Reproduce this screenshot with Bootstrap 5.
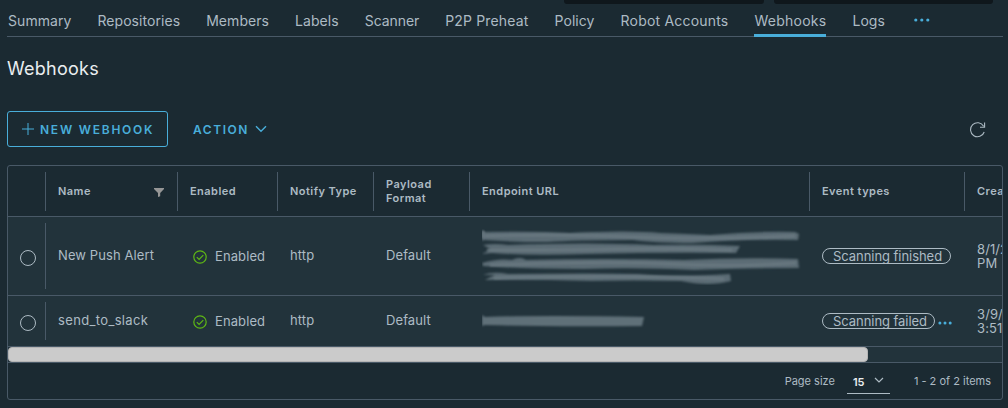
<!DOCTYPE html>
<html lang="en">
<head>
<meta charset="utf-8">
<title>Webhooks</title>
<link href="https://cdn.jsdelivr.net/npm/bootstrap@5.3.0/dist/css/bootstrap.min.css" rel="stylesheet">
<style>
body{background:#1b2a32;color:#adbbc4;font-family:Inter,"Noto Sans",sans-serif;font-size:13px;line-height:14px;height:408px;overflow:hidden}
.page{padding:0 5px 0 7px}
.summary-cards{height:4px;gap:10px;padding-right:10px}
.summary-cards div{background:#0f171c;border-radius:0 0 3px 3px}
.tabs{height:33px;gap:26px;border-bottom:1px solid #495967;padding-left:1px;font-size:14px}
.tabs .nav-link{padding:8px 0 0;height:33px;line-height:18px;color:#adbbc4;white-space:nowrap;letter-spacing:.06px}
.tabs .nav-link.squeezed{letter-spacing:-.06px}
.tabs .nav-link.roomy{letter-spacing:.16px}
.tabs .nav-link.active{box-shadow:inset 0 -3px #49aeda;letter-spacing:.25px}
h1{font-size:18px;line-height:24px;font-weight:400;color:#eaeef0;margin:20px 0 30px;letter-spacing:.25px}
.tool-btn{font-size:12px;font-weight:600;line-height:14px;letter-spacing:1.76px;color:#49aeda;height:36px;border-radius:3px;padding:2px 0 0}
.tool-btn:hover{color:#49aeda}
.tool-btn.outlined{border:1px solid #49aeda;width:161px;padding-left:14px}
.action-btn{margin-left:25px;letter-spacing:1.55px}
.datagrid{border:1px solid #495967;border-radius:3px;height:235px;margin-top:18px;width:996px;overflow:hidden}
.grid-row{display:grid;grid-template-columns:38px 132px 100px 96px 96px 340px 155px 60px;border-bottom:1px solid #495967;width:994px;overflow:hidden}
.grid-row>div{padding-left:12px;display:flex;align-items:center;white-space:nowrap}
.head-row{height:51px;font-size:11px;font-weight:600;letter-spacing:.46px}
.head-row>div{margin:6px 0 5px;border-right:1px solid #495967;padding-bottom:1px}
.body-row{background:#22333b;letter-spacing:.1px}
.body-row>div:first-child{margin:6px 0;border-right:1px solid #495967;padding-bottom:0}
.body-row>div{padding-bottom:1px}
.body-row>.plain{padding-bottom:2px}
.body-row>.masked{padding-bottom:0;padding-top:1px}
.body-row>.state{padding-left:15px;padding-bottom:0;gap:8px}
.state svg{margin-top:2px}
.row-tall{height:79px}
.row-short{height:51px}
.chip{border:1px solid #adbbc4;border-radius:8px;height:16px;line-height:14px;padding-left:10px;letter-spacing:-.05px;width:129px}
.chip.short{width:113px}
.scroll-track{height:16px;background:#22333b;border-bottom:1px solid #495967}
.scroll-thumb{width:860px;height:15px;background:#cbcbcb;border-radius:4px;border:1px solid #b4b4b4}
.foot{height:36px;font-size:11px;padding-right:11px}
.size-select{width:43px;height:23px;border-bottom:1px solid #adbbc4;color:#eaeef0;font-weight:600;font-size:11px;margin:3px 24px 0 12px;padding-left:6px}
svg{display:block;flex:none}
</style>
</head>
<body>
<main class="page">
  <div class="summary-cards d-flex justify-content-end"><div style="width:200px"></div><div style="width:219px"></div></div>
  <nav class="tabs nav flex-nowrap">
    <a class="nav-link">Summary</a><a class="nav-link">Repositories</a><a class="nav-link">Members</a><a class="nav-link">Labels</a><a class="nav-link squeezed">Scanner</a><a class="nav-link roomy">P2P Preheat</a><a class="nav-link">Policy</a><a class="nav-link" style="letter-spacing:.2px">Robot Accounts</a><a class="nav-link active">Webhooks</a><a class="nav-link">Logs</a>
    <a class="nav-link" style="margin-left:3px"><svg width="16" height="18" fill="#49aeda"><circle cx="1.8" cy="8" r="1.6"/><circle cx="7.8" cy="8" r="1.6"/><circle cx="13.8" cy="8" r="1.6"/></svg></a>
  </nav>
  <h1>Webhooks</h1>
  <div class="d-flex align-items-center">
    <button class="btn tool-btn outlined d-flex align-items-center"><svg style="margin-right:6px;margin-bottom:2px" width="12" height="12" stroke="#49aeda"><path d="M6 0v12M0 6h12"/></svg>NEW WEBHOOK</button>
    <button class="btn tool-btn action-btn border-0 d-flex align-items-center">ACTION<svg style="margin-left:6px;margin-bottom:2px" width="12" height="8" fill="none" stroke="#49aeda" stroke-width="1.4"><path d="M1 1.3l5 4.9 5-4.9"/></svg></button>
    <svg class="ms-auto" style="margin-right:17px;margin-top:2px" width="16" height="16" viewBox="0 0 16 16" fill="none" stroke="#adbbc4" stroke-width="1.1"><path d="M14.2 10A7 7 0 1 1 13.6 4.2M14.6.6v4.6H10"/></svg>
  </div>
  <section class="datagrid">
    <div class="grid-row head-row">
      <div></div>
      <div>Name<svg class="ms-auto" style="margin-right:13px;margin-top:3px" width="10" height="9" fill="#969696"><path d="M0 0h10v1L6.2 5v3.3L4 9V5L0 1z"/></svg></div>
      <div>Enabled</div><div>Notify Type</div><div>Payload<br>Format</div><div>Endpoint URL</div><div>Event types</div><div class="border-0">Created</div>
    </div>
    <div class="grid-row body-row row-tall">
      <div><svg class="mt-1" width="16" height="16" fill="none" stroke="#adbbc4"><circle cx="8" cy="8" r="7.5"/></svg></div>
      <div class="plain">New Push Alert</div>
      <div class="state"><svg width="14" height="14" fill="none" stroke="#5eb715" stroke-width="1.2"><circle cx="7" cy="7" r="6.2"/><path d="M3.8 7.2l2.3 2.3 4.2-4.3"/></svg>Enabled</div>
      <div class="plain">http</div><div class="plain">Default</div>
      <div class="masked"><svg width="322" height="56" fill="#5b6c74"><defs><filter id="smear" x="-5%" y="-40%" width="110%" height="180%"><feGaussianBlur stdDeviation="1"/></filter></defs><g filter="url(#smear)"><path d="M0 1l3 2q50-1 85 1 60-3 90 0 30 1 50 2 45-4 85-3l4 2-1 6q-60-1-105 3-40 0-60-3-60 0-85 2-35 0-64-2l-2 1z"/><path d="M1 16q12-2 25 0 80-3 145 0 45-1 87 1l-4 7q-70-1-150 1-55 2-94-1l-10 1q6-3 8-5z"/><path d="M0 34q16-5 30-3 8-4 14 0 80-2 158 0 60-3 114-1l1 9q-65 0-105 2-60-3-110-1-60 0-101-3z"/><path d="M1 46q10-4 25-1 85-1 130 0 40 3 92 0l1 7q-22 6-50 0-50-1-90 0-65-2-106-1 7-4 10-5z"/></g><g fill="none" stroke="#6c7b83" stroke-width="2" filter="url(#smear)"><path d="M1 2v7M3 7q80-2 150 1t160-1M5 21q80 0 130-1t115 1M8 36q120-4 180-1t126-1M12 49q90-2 150-1t80 2"/></g></svg></div>
      <div><span class="chip">Scanning finished</span></div><div>8/1/23, 3:42<br>PM</div>
    </div>
    <div class="grid-row body-row row-short">
      <div><svg class="mt-1" width="16" height="16" fill="none" stroke="#adbbc4"><circle cx="8" cy="8" r="7.5"/></svg></div>
      <div class="plain" style="letter-spacing:.35px">send_to_slack</div>
      <div class="state"><svg width="14" height="14" fill="none" stroke="#5eb715" stroke-width="1.2"><circle cx="7" cy="7" r="6.2"/><path d="M3.8 7.2l2.3 2.3 4.2-4.3"/></svg>Enabled</div>
      <div class="plain">http</div><div class="plain">Default</div>
      <div><svg width="165" height="16" fill="#5f7078"><path filter="url(#smear)" d="M0 2l3 2q60-2 159 0l-2 9q-90 1-157-1l-3 1z"/></svg></div>
      <div><span class="chip short">Scanning failed</span><svg class="mt-1" style="margin-left:3px" width="14" height="4" fill="#49aeda"><circle cx="1.9" cy="2" r="1.5"/><circle cx="7" cy="2" r="1.5"/><circle cx="12.2" cy="2" r="1.5"/></svg></div><div>3/9/23,<br>3:51 PM</div>
    </div>
    <div class="scroll-track"><div class="scroll-thumb"></div></div>
    <div class="foot d-flex align-items-center justify-content-end">
      <span>Page size</span>
      <div class="size-select d-flex align-items-center">15<svg style="margin-left:10px;margin-bottom:4px" width="10" height="6" fill="none" stroke="#adbbc4" stroke-width="1.2"><path d="M1 1l4 4 4-4"/></svg></div>
      <span>1 - 2 of 2 items</span>
    </div>
  </section>
</main>
<script src="https://cdn.jsdelivr.net/npm/bootstrap@5.3.0/dist/js/bootstrap.bundle.min.js"></script>
</body>
</html>
